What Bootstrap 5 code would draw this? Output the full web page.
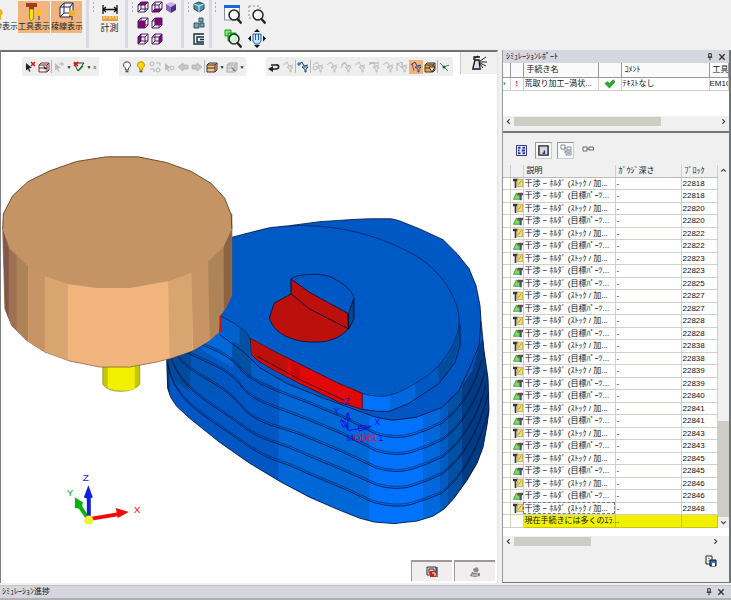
<!DOCTYPE html>
<html lang="ja">
<head>
<meta charset="utf-8">
<meta name="viewport" content="width=device-width, initial-scale=1">
<title>シミュレーション</title>
<link href="https://cdn.jsdelivr.net/npm/bootstrap@5.3.0/dist/css/bootstrap.min.css" rel="stylesheet">
<style>
body{font-family:"Liberation Sans","Noto Sans CJK JP",sans-serif;font-size:8px;line-height:12px;background:#f0f0f0;color:#111}
svg{display:block}
.tool{padding:0;border:0;background:none;color:#222;line-height:12px;font-size:8px;border-radius:0;white-space:nowrap}
.tool.active-tool{background:#f0b47c}
.ribbon{height:50px}
.ribbon-group{border-right:3px solid #dadae2;padding:1px 4px 0 3px;height:48px;gap:2px}
.last-group{border:0;padding-left:2px}
.grip{width:4px;height:12px;background:radial-gradient(circle,#a8b4bc 1px,transparent 1px) 0 0/3px 4px}
.label-tool{width:32px;height:32px}
.cut-tool{width:18px;height:32px;overflow:hidden}
.measure{width:23px;font-size:9px}
.cubes{display:grid;grid-template-columns:repeat(3,12px);gap:4px 2px}
.stack{display:grid;gap:4px}
.lenses{display:grid;grid-template-columns:18px 18px;gap:4px 6px}
.i12{width:12px;height:12px}.i18{width:18px;height:20px}
.view{background:#fff;border-top:2px solid #707070;border-left:1px solid #808080;border-right:1px solid #e4e4e4;min-width:0}
.float-bars{height:25px;padding-left:21px}
.bar{background:#eee;border-radius:2px;height:19px;margin-top:5px;padding:0 1px}
.bar + .bar{margin-left:20px}
.bar .tool{width:14px;height:14px;display:grid;place-items:center}
.bar .drop{width:6px;font-size:5px}
.bar .div{border-left:1px solid #b8b8b8;height:13px}
.tab-tool{width:37px;height:22px;background:#f0f0f0;border-left:1px solid #ccc;flex-shrink:0}
.off{color:#bbb}
.scene{min-height:0}
.scene svg{width:100%;height:100%}
.corner{height:23px;gap:2px;padding-right:2px}
.corner .tool{width:41px;height:21px;background:#f0eeee;border:solid #a09898;border-width:2px 0 0 1px;display:grid;place-items:center}
.report{width:229px;border-left:1px solid #999;border-right:2px solid #6f7478;border-bottom:1px solid #777}
.caption{background:#d6d6e0;height:13px;padding:0 3px}
.upper{height:53px;background:#fff;overflow:hidden}
table.grid{table-layout:fixed;width:100%;line-height:11px;white-space:nowrap}
.grid td,.grid th{border-right:1px solid #d0d0c4;border-bottom:1px solid #d0d0c8;padding:0 1px;overflow:hidden;font-weight:400;height:12px}
.grid th{background:#f0f0f0;border-bottom-color:#bbb;padding-left:3px}
.upper .grid th{height:14px;background:#fafafa;border-color:#999}.upper .grid td{height:13px}
.list tbody tr:nth-child(even) td{height:13px}
.list td:nth-child(2){padding:0 1px 0 2px}
.list .warn td:nth-child(n+3){background:#f0f000;border-color:#c8c800;overflow:visible}
.focus-cell{outline:1px dashed #777;outline-offset:-1px}
.hbar{height:11px;background:#f0f0f0}
.hbar button,.vbar button{padding:0;border:0;background:none;width:11px;height:11px;display:grid;place-items:center}
.thumb{background:#cdcdc3}
.hbar .thumb{height:9px}
.vbar{width:12px;background:#f0f0f0}
.panel-tools{height:34px;padding:2px 0 0 10px;border-top:2px solid #777}
.panel-tools .tool{width:17px;height:17px;display:grid;place-items:center;margin-right:5px}
.panel-tools .on{background:#f8f8f8;border:1px solid #ccc;border-top-color:#999;border-left-color:#999}
.status{background:#d6d6e0;height:15px;border-top:1px solid #c4c4c4;border-bottom:2px solid #b0b0b0;padding:0 2px;margin-top:2px}
</style>
<script src="https://cdn.jsdelivr.net/npm/bootstrap@5.3.0/dist/js/bootstrap.bundle.min.js"></script>
</head>
<body class="d-flex flex-column min-vh-100">
<svg width="0" height="0" class="position-absolute" aria-hidden="true"><defs>
<symbol id="bulb" viewBox="0 0 12 12"><path d="M6 .8a3.2 3.2 0 0 0-1.8 6L4.8 9h2.4l.6-2.2A3.2 3.2 0 0 0 6 .8z" stroke="currentColor"/><path d="M4.5 9.5h3v1.8h-3z" fill="#555"/></symbol>
<symbol id="cube" viewBox="0 0 12 12"><path d="M1 4h7v7H1zM1 4l3-3h7L8 4M11 1v7l-3 3M4 1v7h7M4 8l-3 3" stroke="#502060" fill="none"/></symbol>
<symbol id="stock" viewBox="0 0 12 12"><path d="M0 1h6v3H4v8H2V4H0z" fill="#333"/><path d="M5 1.500h6.500v9H5z" fill="#f0e070" stroke="#a09040" stroke-width=".8"/><path d="M6.500 8l3.500-5" stroke="#b08030"/></symbol>
<symbol id="part" viewBox="0 0 12 12"><path d="M.5 10L4 2.500l4 2 1 5.500z" fill="#70e060" stroke="#287828" stroke-width=".8"/><path d="M6 2h6v3h-1.500v6H8V5H6z" fill="#456"/><path d="M5 3h2v2.500H5z" fill="#e03010"/></symbol>
<symbol id="flt" viewBox="0 0 12 12"><path d="M1 4l4-3 2 4 4-1M5 6h6L9 8.500V11H8V8.500z" fill="none" stroke="currentColor"/></symbol>
<symbol id="cur" viewBox="0 0 12 12"><path d="M2 2l6 5-3 .3 1.500 3-1.300.5L4 8 2 9.500z" fill="currentColor"/></symbol>
<symbol id="box" viewBox="0 0 12 12"><path d="M1 4l2-2h8v7l-2 2H1zM1 4h8v7M9 4l2-2M1 7h8" stroke="currentColor"/></symbol>
<symbol id="l" viewBox="0 0 12 12"><path d="M8 2L4 6l4 4" stroke="#444" stroke-width="2" fill="none"/></symbol>
<symbol id="pin" viewBox="0 0 12 12"><path d="M4 1h4v5H4zM2.500 6.500h7M6 7v4" stroke="#333" stroke-width="1.500" fill="none"/></symbol>
<symbol id="x" viewBox="0 0 12 12"><path d="M2 2l8 8M10 2l-8 8" stroke="#333" stroke-width="2"/></symbol>
<symbol id="lens" viewBox="0 0 18 20"><circle cx="10" cy="10" r="5" fill="#f4ffffb0" stroke="#222" stroke-width="1.500"/><path d="M13.500 14l4 4.500" stroke="#222" stroke-width="2.400"/></symbol>
</defs></svg>

<header class="ribbon d-flex">
  <div class="ribbon-group d-flex ps-0">
    <div class="d-flex">
    <button class="tool cut-tool d-flex flex-column align-items-end"><svg class="i18" viewBox="0 0 18 20"><path d="M0 8q5 2 1 7v4h-1z" fill="#f8b010"/></svg><span>ｸ表示</span></button>
    <button class="tool active-tool label-tool"><svg class="i18 mx-auto" viewBox="0 0 18 20"><path d="M1 2h11v4H9v3H4V6H1z" fill="#a04020"/><path d="M4.500 8h4v10l-2 1.500-2-1.500z" fill="#f0e800" stroke="#665500" stroke-width=".6"/><circle cx="14" cy="12" r="3" fill="#ffc020"/><path d="M13 15h2v4h-2z" fill="#777"/></svg>工具表示</button>
    <button class="tool active-tool label-tool border-start border-white"><svg class="i18 mx-auto" viewBox="0 0 18 20"><path d="M2 6l4-4h9v9l-3 5H2z" fill="#fff"/><path d="M2 6h10v10H2zM2 6l4-4h9l-3 4M15 2v9l-3 5M6 2v10h9M6 12l-4 4" fill="none" stroke="#202050"/><circle cx="14" cy="12" r="3" fill="#ffb020"/><path d="M13 15h2v4h-2z" fill="#777"/></svg>稜線表示</button>
    </div>
  </div>
  <div class="ribbon-group d-flex"><span class="grip"></span>
    <button class="tool measure mt-1 align-self-start"><svg class="mx-auto" width="16" height="17" viewBox="0 0 16 17"><path d="M1 0v9M15 0v9M1 4.500h14M4 2L1 4.500 4 7M12 2l3 2.500L12 7" stroke="#111" fill="none" stroke-width="1.300"/><path d="M0 11h16v5H0z" fill="#e8a040"/><path d="M2 11v3m3-3v2m3-2v3m3-3v2m3-2v3" stroke="#fff0a0"/></svg>計測</button>
  </div>
  <div class="ribbon-group d-flex"><span class="grip"></span>
    <div class="cubes align-content-start">
      <button class="tool"><svg class="i12"><path d="M1 4l3-3h7L8 4z" fill="#880088"/><use href="#cube"/></svg></button>
      <button class="tool"><svg class="i12"><path d="M1 11l3-3h7l-3 3z" fill="#880088"/><use href="#cube"/></svg></button>
      <button class="tool"><svg class="i12" viewBox="0 0 12 12"><path d="M1 3l5-2 5 2-5 3z" fill="#c8b0f0"/><path d="M1 3l5 3v6l-5-3z" fill="#8868b8"/><path d="M6 6l5-3v6l-5 3z" fill="#503070"/></svg></button>
      <button class="tool"><svg class="i12"><path d="M1 4h7v7H1z" fill="#880088"/><use href="#cube"/></svg></button>
      <button class="tool"><svg class="i12"><path d="M4 1h7v7H4z" fill="#880088"/><use href="#cube"/></svg></button><span></span>
      <button class="tool"><svg class="i12"><path d="M1 4l3-3v7l-3 3z" fill="#880088"/><use href="#cube"/></svg></button>
      <button class="tool"><svg class="i12"><path d="M8 4l3-3v7l-3 3z" fill="#880088"/><use href="#cube"/></svg></button>
    </div>
  </div>
  <div class="ribbon-group d-flex"><span class="grip"></span>
    <div class="stack align-content-start">
      <button class="tool"><svg class="i12" viewBox="0 0 12 12"><path d="M1 3l5-2 5 2v5l-5 3-5-3z" fill="#4890a8" stroke="#204050"/><path d="M1 3l5 2 5-2M6 5v6" stroke="#d0f0f8" fill="none"/></svg></button>
      <button class="tool"><svg class="i12" viewBox="0 0 12 12"><path d="M1 6h5v5H1zM6 1h4v4H6zM7 6h4v4H7z" fill="#68a8c0" stroke="#405060"/></svg></button>
      <button class="tool"><svg class="i12" viewBox="0 0 12 12"><path d="M11 1H1v10h10M11 4H4v5h7M7 6.500h4" stroke="#103040" stroke-width="1.400" fill="none"/></svg></button>
    </div>
  </div>
  <div class="ribbon-group last-group d-flex"><span class="grip"></span>
    <div class="lenses align-content-start ms-1 pt-1">
      <button class="tool"><svg class="i18"><path d="M.5 1h15v14H.5z" fill="#fff" stroke="#88a"/><path d="M0 0h16v3H0z" fill="#1868e0"/><use href="#lens"/></svg></button>
      <button class="tool"><svg class="i18"><path d="M1 1h11v12H1z" fill="none" stroke="#889" stroke-dasharray="2 2"/><use href="#lens"/></svg></button>
      <button class="tool"><svg class="i18"><path d="M1 1h6v6H1zM4 4h8v8H4z" fill="#80f080" stroke="#10a010"/><use href="#lens"/></svg></button>
      <button class="tool"><svg class="i18" viewBox="0 0 18 20"><path d="M9 0l3 3H6zM9 19l3-3H6zM0 9.500l3-3v6zM18 9.500l-3-3v6z" fill="#111"/><path d="M5 5h8v7l-2 3H7l-2-3z" fill="#c8e8ff" stroke="#2060b0"/><path d="M7.500 5v6m3-6v6" stroke="#2060b0"/></svg></button>
    </div>
  </div>
</header>

<main class="d-flex flex-grow-1">
  <section class="view d-flex flex-column flex-grow-1">
    <div class="float-bars d-flex">
      <div class="bar d-flex align-items-center">
        <button class="tool"><svg class="i12"><use href="#cur"/><path d="M7 1l4 4M11 1L7 5" stroke="#e01010" stroke-width="1.500"/></svg></button>
        <button class="tool"><svg class="i12" color="#733" fill="#eee"><use href="#box"/><path d="M5 4l4 4-2 .3.5 2z" fill="#222"/></svg></button><i class="div"></i>
        <button class="tool off"><svg class="i12"><use href="#cur"/><path d="M6 3h5M9 1v4" stroke="#b8b8b8"/></svg></button>
        <button class="tool drop">▼</button>
        <button class="tool"><svg class="i12" viewBox="0 0 12 12"><path d="M1 2h10L5 10z" fill="none" stroke="#333"/><path d="M1 1l4 4M5 1L1 5" stroke="#e01010" stroke-width="1.600"/><path d="M5 10l5-5" stroke="#208020" stroke-width="1.500"/></svg></button>
        <button class="tool drop">▼</button><button class="tool drop">≡</button>
      </div>
      <div class="bar d-flex align-items-center">
        <button class="tool"><svg class="i12" fill="#fff" color="#444"><use href="#bulb"/></svg></button>
        <button class="tool"><svg class="i12" fill="#ffd800" color="#c09000"><use href="#bulb"/></svg></button>
        <button class="tool"><svg class="i12" viewBox="0 0 12 12" fill="none" stroke="#b4b4b4"><circle cx="3" cy="3" r="2"/><circle cx="9" cy="9" r="2"/><path d="M7 2h4v3M1 8h4v3"/></svg></button>
        <button class="tool off"><svg class="i12"><use href="#cur"/><circle cx="9" cy="7" r="2" fill="none" stroke="#b8b8b8"/></svg></button>
        <button class="tool"><svg class="i12" viewBox="0 0 12 12"><path d="M1 6l5-4v2h5v4H6v2z" fill="#c8c8c8" stroke="#aaa" stroke-width=".7"/></svg></button>
        <button class="tool"><svg class="i12" viewBox="0 0 12 12"><path d="M11 6L6 2v2H1v4h5v2z" fill="#c8c8c8" stroke="#aaa" stroke-width=".7"/></svg></button><i class="div"></i>
        <button class="tool"><svg class="i12" fill="#f0c080" color="#433"><use href="#box"/></svg></button><button class="tool drop">▼</button>
        <button class="tool"><svg class="i12" fill="#ddd" color="#aaa"><use href="#box"/><path d="M5 5l5 5H7z" fill="#888"/></svg></button><button class="tool drop">▼</button>
      </div>
      <div class="bar d-flex align-items-center">
        <button class="tool"><svg class="i12" viewBox="0 0 12 12"><path d="M4 8h4c4 0 3-5 0-4H3" fill="none" stroke="#222" stroke-width="1.700"/><path d="M5 5L0 8l5 3z" fill="#222"/></svg></button>
        <button class="tool off"><svg class="i12"><use href="#flt"/></svg></button><i class="div"></i>
        <button class="tool" style="color:#246"><svg class="i12"><use href="#flt"/><path d="M2 1v4M0 3h4" stroke="#2060c0"/></svg></button><i class="div"></i>
        <button class="tool off"><svg class="i12"><use href="#flt"/><circle cx="3" cy="7" r="2" fill="none" stroke="#bbb"/></svg></button>
        <button class="tool off"><svg class="i12"><use href="#flt"/></svg></button>
        <button class="tool off"><svg class="i12"><use href="#flt"/><path d="M1 7l3-5 4 3" stroke="#bbb" fill="none"/></svg></button>
        <button class="tool off"><svg class="i12"><use href="#flt"/></svg></button>
        <button class="tool off"><svg class="i12"><use href="#flt"/><path d="M1 2h10" stroke="#aaa"/></svg></button>
        <button class="tool off"><svg class="i12"><use href="#flt"/></svg></button>
        <button class="tool off"><svg class="i12"><use href="#flt"/><path d="M1 10V2l5 5V1" stroke="#bbb" fill="none"/></svg></button>
        <button class="tool active-tool" style="color:#348"><svg class="i12"><use href="#flt"/><path d="M2 2l2 8" stroke="#724ab0"/></svg></button>
        <button class="tool"><svg class="i12" fill="#f0a850" color="#432"><use href="#box"/><path d="M5 6h6L8 11z" fill="#eee" stroke="#333"/></svg></button><i class="div"></i>
        <button class="tool"><svg class="i12" viewBox="0 0 12 12"><path d="M1 2l4 4M5 6l5-2M5 6l4 4" stroke="#408050" fill="none"/><circle cx="5" cy="6" r="1.500" fill="#345"/></svg></button>
      </div>
      <button class="tool tab-tool ms-auto"><svg class="mx-auto" width="17" height="16" viewBox="0 0 17 16"><path d="M1 14h9M2 13l2-8h4l1 8M3 5V2h6M4 3l3-2" fill="#dde" stroke="#111" stroke-width="1.300"/><path d="M9 6l6-4M9 7h7M9 8l6 3M9 9l3 4" stroke="#222"/></svg></button>
    </div>
    <div class="scene flex-grow-1">
      <svg viewBox="1 77 497 482" role="img" aria-label="3D">
        <defs><clipPath id="sil"><path id="silp" d="M200 248L231 237 250 232 270 227 290 225 320 221 350 219 370 218H392L400 220 420 228 444 239 458 253 470 268 477 285 481 305 482 320 485 350 489 378 490 410 488 425 484 447 478 463 468 480 455 498 445 509 434 516 418 521 395 523.500 375 522 360 518 340 510 310 497 280 481 250 463 220 442 190 418 177 406 171 397 168 388 167 360 168 340z"/></clipPath></defs>
        <path d="M103 358h37v26q-6 7-19 7t-18-7z" fill="#c8c800" stroke="#777700" stroke-width=".6"/><path d="M108 358h27v31q-14 3-27-1z" fill="#f0f000"/>
        <g clip-path="url(#sil)">
          <path d="M160 210h340v320H160z" fill="#0058c4"/>
          <path d="M160 330h10v80h-10z" fill="#003c84"/><path d="M170 330h23l-3 62-20-15z" fill="#004c9c"/><path d="M193 330h10l20 65-33-3z" fill="#0058b8"/><path d="M203 310h31v57l-31-17z" fill="#0068d8"/><path d="M234 325h18v55l-20-20z" fill="#0050a4"/>
          <path d="M252 356l32 20v14l-32-14z" fill="#0060c8"/><path d="M280 370l94 45v110l-95-43z" fill="#0068d8"/><path d="M370 412l18 8 36-6v112h-54z" fill="#0072fc"/><path d="M424 414l17-6v108l-17 8z" fill="#0068dc"/><path d="M441 406l8-6v112l-8 6z" fill="#005cc4"/><path d="M449 398l14-14v110l-14 20z" fill="#0050a4"/><path d="M463 380l30-60v130l-30 50z" fill="#003c84"/>
          <path d="M482 310L479 350 473 370 460 390 443 407 417 417 393 420 377 417 363 411 325 397 287 383 260 367 250 357 240 300z" fill="#0058c4"/>
          <path d="M482 320L480 345 473 362 460 390 443 407 417 417 393 420 377 417 363 412 325 398 287 383 260 367 250 357 242 350 220 334" fill="none" stroke="#001c50"/>
          <g id="steps" fill="none" stroke="#001c50" stroke-width=".9">
            <path d="M203 345C222 352 232 358 240 368S262 386 307 402L343 417 377 434Q397 440 413 435T443 423Q472 402 483 360"/>
            <path d="M187 352C205 362 228 368 240 384S262 402 307 419L343 434 377 451Q397 457 413 452T443 440Q472 419 486 372"/>
            <path d="M176 354C190 375 222 382 240 404S275 424 307 437L343 452 377 468Q397 474 413 469T443 457Q474 434 487 385"/>
            <path d="M171 356C180 390 215 405 240 424S275 440 307 455L343 470 377 485Q397 491 413 486T443 474Q474 452 489 395"/>
            <path d="M168 364C175 402 205 415 240 440S275 457 307 473L343 488 373 502Q397 509 413 504T443 493Q474 468 490 410"/></g>
          <use href="#steps" y="-2" opacity=".65"/>
          <path d="M461 320L460 345 453 363 440 380 410 402 390 411 377 411 363 409 363 391 397 390 417 380 440 365 456 345z" fill="#0058c4"/><path d="M461 320v22l-8 23-13 17-2-20 12-15 8-20z" fill="#004c98"/><path d="M363 391h29v20l-15 1-14-3z" fill="#0072fc"/><path d="M391 391l25-9v19l-25 10z" fill="#0068dc"/>
          <path d="M363 409L377 411 390 411 410 403 440 383 456 362 461 345V325" fill="none" stroke="#001c50"/>
          <path d="M220 315v17l22 14 10 8v-18l-16-12z" fill="#0060cc"/><path d="M240 325l12 11v18l-12-9z" fill="#0050a4"/>
          <path d="M220 241L250 232 280 225 320 225 345 229 377 237 413 253 443 277 457 300 460 320 457 340 447 359 427 376 417 382 397 393 383 396 363 393 337 383 307 368 277 353 251 339 250 334 235 323 220 315z" fill="#005ac6"/>
          <path d="M290 225C345 223 385 238 413 253S460 298 460 320 442 366 427 376 397 395 383 396 345 387 337 383L307 368 277 353 251 339 247 332 235 323 220 315" fill="none" stroke="#002460" stroke-width=".8"/>
          <path d="M251 338L277 352 307 367 337 382 363 393V409L340 402 300 383 275 370 258 360 252 354z" fill="#e00808" stroke="#400" stroke-width=".7"/><path d="M251.500 339L277 353 288 358V374L275 368 259 359 252 353z" fill="#bc100c"/><path d="M292 362l8 4v15l-8-4z" fill="#c80808"/><path d="M258 356L300 379 345 400" stroke="#500" fill="none"/>
        </g>
        <use href="#silp" fill="none" stroke="#001030" stroke-width=".8"/>
        <g transform="translate(160 210) scale(.333333)" stroke="#001030" stroke-width="2.500">
          <path d="M395 205C410 190 480 188 505 196S582 235 584 265V325L568 355 395 250z" fill="#0058c4"/>
          <path d="M568 308L583 265V327L568 355z" fill="#004890"/>
          <path d="M395 250L345 277 330 320C340 370 400 395 465 395S550 370 568 355z" fill="#bc100c"/>
          <path d="M395 205L450 245 565 308 567 355 450 295 395 250z" fill="#bc100c"/>
        </g>
        <g transform="translate(0 140) scale(.333333)">
          <path d="M8 265L15 505 35 555 80 600 135 635 210 662 300 680H390L470 665 510 655 580 630 630 600 658 575 662 525 680 500 697 465V220z" fill="#f0b47c" stroke="#704c30" stroke-width="2"/>
          <path d="M9 250h76v354l-50-49-20-50z" fill="#ac8458"/><path d="M9 270l41 60v241l-15-16-20-50z" fill="#a07054"/><path d="M9 265l17 60v210l-11-30z" fill="#805848"/>
          <path d="M85 370h50v264l-50-30z" fill="#c89464"/><path d="M135 390h69v270l-69-26z" fill="#d8a470"/><path d="M505 390h72v241l-67 23z" fill="#d8a470"/><path d="M575 360h55v240l-50 30z" fill="#c89464"/><path d="M625 320h49v190l-12 15-4 50-28 25z" fill="#ac8458"/><path d="M672 280l25-20v205l-24 48z" fill="#8c6444"/>
          <path d="M8 265L10 220 38 165 85 122 150 90 230 62 320 48H415L500 65 575 92 635 128 675 172 695 222 697 265 672 318 627 362 572 398 505 422 390 442H290L203 430 130 405 85 378 30 325z" fill="#c49464"/>
          <path d="M8 265L10 220 38 165 85 122 150 90 230 62 320 48H415L500 65 575 92 635 128 675 172 695 222 697 265" fill="none" stroke="#503820" stroke-width="2.500"/>
        </g>
        <path d="M221 315v17" stroke="#d01010" stroke-width="2"/>
        <g stroke="#1010e0" fill="none"><path d="M348.500 431v-18M346 419l2.500-7 2.500 7zM349 430l-7-11 5 4zM341 420l3 7 4-2M350 430l18-3M359 425l13 1-12 5z"/></g>
        <g font-size="9" fill="#1010e0"><text x="345" y="404">Z</text><text x="334" y="414">Y</text><text x="375" y="425">X</text></g>
        <text x="347" y="441" font-size="9"><tspan fill="#3010e0">M</tspan><tspan fill="#e01030">ODEL</tspan><tspan fill="#1010e0">1</tspan></text>
        <path d="M89 519l30-5" stroke="#f80808" stroke-width="4"/><path d="M116 508l13 4-11 6z" fill="#f80808"/>
        <path d="M88 518l-9-13" stroke="#08b010" stroke-width="4"/><path d="M75 497l8 5-1 7-7-1z" fill="#08b010"/>
        <path d="M89 518v-20" stroke="#1020e0" stroke-width="4"/><path d="M88.500 485l4.500 12-4.500 2-4.500-2z" fill="#1020e0"/><circle cx="89" cy="520" r="4.500" fill="#f4f030"/>
        <g font-size="10"><text x="83" y="481" fill="#1020e0">Z</text><text x="67" y="496" fill="#08b010">Y</text><text x="134" y="513" fill="#f80808">X</text></g>
      </svg>
    </div>
    <div class="corner d-flex justify-content-end">
      <button class="tool"><svg class="i12" viewBox="0 0 12 12"><path d="M1 1h9v8H1zM3 3h5v4H3z" fill="#ddd" stroke="#333"/><path d="M4 5h6v6H4z" fill="#d82010"/><path d="M6 7h3v3" stroke="#fff" fill="none"/><path d="M11 1v10" stroke="#111"/></svg></button>
      <button class="tool"><svg class="i12" viewBox="0 0 12 12"><path d="M1 10l2-4h2L4 3l4-2 2 3-2 3h3v3l-5 1z" fill="#888"/><path d="M4 6l5 1M3 9h6" stroke="#ddd"/></svg></button>
    </div>
  </section>

  <aside class="report d-flex flex-column ms-1 flex-shrink-0">
    <div class="caption d-flex align-items-center"><span class="me-auto">ｼﾐｭﾚｰｼｮﾝﾚﾎﾟｰﾄ</span><button class="tool me-1" aria-label="固定"><svg width="8" height="8"><use href="#pin"/></svg></button><button class="tool" aria-label="閉じる"><svg width="8" height="8"><use href="#x"/></svg></button></div>
    <div class="upper"><table class="grid"><colgroup><col style="width:7px"><col style="width:13px"><col style="width:75px"><col style="width:23px"><col style="width:88px"><col></colgroup>
      <thead><tr><th></th><th></th><th>手続き名</th><th></th><th>ｺﾒﾝﾄ</th><th>工具</th></tr></thead>
      <tbody><tr><td class="p-0 text-success fw-bold">›</td><td class="text-danger fw-bold text-center">!</td><td>荒取り加工−渦状...</td><td><svg width="11" height="11" viewBox="0 0 12 12" class="mx-auto"><path d="M1 6l3-2 2 2 4-4 2 2-6 7z" fill="#28b028" stroke="#187818" stroke-width=".7"/></svg></td><td>ﾃｷｽﾄなし</td><td class="px-0">EM10</td></tr></tbody></table></div>
    <div class="hbar d-flex align-items-center mb-1"><button aria-label="左"><svg width="7" height="7"><use href="#l"/></svg></button><span class="thumb" style="width:65%"></span><button class="ms-auto" aria-label="右"><svg width="7" height="7"><use href="#l" transform="rotate(180 3.5 3.5)"/></svg></button></div>
    <div class="panel-tools d-flex align-items-center">
      <button class="tool"><svg width="11" height="11" viewBox="0 0 12 12"><path d="M.5.500h11v11H.5z" fill="#fff" stroke="#225"/><path d="M2 3h3M7 3h3M2 6h2M6 6h4M2 9h3M7 9h3" stroke="#2030c0" stroke-width="2"/></svg></button>
      <button class="tool on"><svg width="11" height="11" viewBox="0 0 12 12"><path d="M1 1h10v10H1z" fill="#d8d8e0" stroke="#222" stroke-width="1.500"/><path d="M7 6v3h-2" stroke="#2030c0" stroke-width="1.500" fill="none"/></svg></button>
      <button class="tool on"><svg width="12" height="12" viewBox="0 0 12 12"><path d="M1 1h4v4H1zM7 3h4v3H7zM6 7h5v4H6zM5 3v6" stroke="#889" fill="#fff"/><path d="M7 9h3" stroke="#36c"/></svg></button>
      <button class="tool"><svg width="12" height="12" viewBox="0 0 12 12"><path d="M1 3h4v4H1zM7 3h4.500v3H7zM5 5h2" stroke="#667" fill="#fff"/></svg></button>
    </div>
    <div class="d-flex bg-white">
      <table class="grid list"><colgroup><col style="width:7px"><col style="width:13px"><col style="width:92px"><col style="width:66px"><col></colgroup>
      <thead><tr><th></th><th></th><th>説明</th><th>ｶﾞｳｼﾞ深さ</th><th>ﾌﾞﾛｯｸ</th></tr></thead>
      <tbody id="rows"></tbody></table>
      <div class="vbar d-flex flex-column align-items-center"><button aria-label="上"><svg width="7" height="7"><use href="#l" transform="rotate(90 3.5 3.5)"/></svg></button><span class="thumb w-100 mt-auto" style="height:96px"></span><button aria-label="下"><svg width="7" height="7"><use href="#l" transform="rotate(-90 3.5 3.5)"/></svg></button></div>
    </div>
    <div class="bg-white pt-2"><div class="hbar d-flex align-items-center"><button aria-label="左"><svg width="7" height="7"><use href="#l"/></svg></button><span class="thumb" style="width:34%"></span><button class="ms-auto me-2" aria-label="右"><svg width="7" height="7"><use href="#l" transform="rotate(180 3.5 3.5)"/></svg></button></div></div>
    <div class="d-flex justify-content-end pe-2 me-1 mt-2"><button class="tool" aria-label="保存"><svg width="12" height="12" viewBox="0 0 12 12"><path d="M1 1h6v8H1z" fill="#fff" stroke="#222"/><path d="M3 3l2 1M3 6h2" stroke="#c50"/><path d="M5 5h6v6H5z" fill="#2878d0" stroke="#111"/><path d="M7 8h3v3H7z" fill="#fff"/></svg></button></div>
  </aside>
</main>
<footer class="status d-flex align-items-center"><span class="me-auto">ｼﾐｭﾚｰｼｮﾝ進捗</span><button class="tool me-1" aria-label="固定"><svg width="8" height="8"><use href="#pin"/></svg></button><button class="tool me-1" aria-label="閉じる"><svg width="8" height="8"><use href="#x"/></svg></button></footer>
<script>
const blocks = 's22818 p22818 s22820 p22820 s22822 p22822 s22823 p22823 p22825 s22827 p22827 s22828 p22828 s22838 p22838 s22839 p22839 p22840 s22841 p22841 s22843 p22843 s22845 p22845 s22846 p22846 s22848'.split(' ');
document.getElementById('rows').innerHTML = blocks.map((b, i) => {
  const stock = b[0] === 's';
  return `<tr><td></td><td><svg width="10" height="10"><use href="#${stock ? 'stock' : 'part'}"/></svg></td><td${i === blocks.length - 1 ? ' class="focus-cell"' : ''}>干渉 − ﾎﾙﾀﾞ (${stock ? 'ｽﾄｯｸ / 加' : '目標ﾊﾟｰﾂ'}...</td><td>-</td><td>${b.slice(1)}</td></tr>`;
}).join('') + '<tr class="warn"><td></td><td></td><td>現在手続きには多くのｴﾗ...</td><td></td><td></td></tr>';
</script>
</body>
</html>
